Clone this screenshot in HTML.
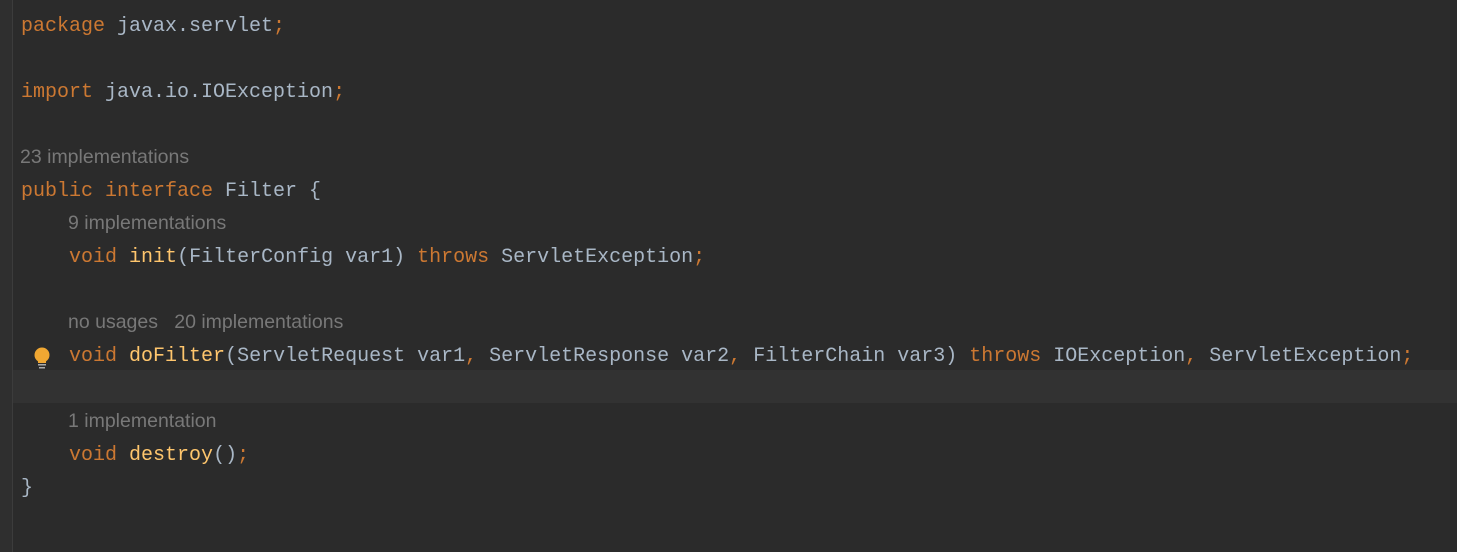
<!DOCTYPE html><html><head><style>
body{margin:0;width:1457px;height:552px;background:#2b2b2b;overflow:hidden;position:relative}
.g{position:absolute;left:0;top:0;width:12px;height:552px;background:#2f2f2f;border-right:1px solid #3c3c3c}
.hl{position:absolute;left:13px;top:370px;width:1444px;height:33px;background:#323232}
.l{position:absolute;left:21px;font:20px "Liberation Mono",monospace;color:#a9b7c6;white-space:pre;line-height:33px;height:33px}
.h{position:absolute;font:19.5px "Liberation Sans",sans-serif;color:#787878;white-space:pre;line-height:33px}
.k{color:#cc7832}.m{color:#ffc66d}
</style></head><body>
<div class="g"></div><div class="hl"></div>
<div class="l" style="top:10px"><span class="k">package</span> javax.servlet<span class="k">;</span></div>
<div class="l" style="top:76px"><span class="k">import</span> java.io.IOException<span class="k">;</span></div>
<div class="h" style="top:141px;left:20px">23 implementations</div>
<div class="l" style="top:175px"><span class="k">public interface</span> Filter {</div>
<div class="h" style="top:207px;left:68px">9 implementations</div>
<div class="l" style="top:241px">    <span class="k">void</span> <span class="m">init</span>(FilterConfig var1) <span class="k">throws</span> ServletException<span class="k">;</span></div>
<div class="h" style="top:306px;left:68px">no usages   20 implementations</div>
<svg style="position:absolute;left:33px;top:347px" width="18" height="24"><circle cx="9" cy="8" r="7.5" fill="#f0a732"/><rect x="5" y="13" width="8" height="3" fill="#f0a732"/><rect x="5" y="17" width="8" height="1.5" fill="#aaa"/><rect x="6" y="20" width="6" height="1.5" fill="#aaa"/></svg>
<div class="l" style="top:340px">    <span class="k">void</span> <span class="m">doFilter</span>(ServletRequest var1<span class="k">,</span> ServletResponse var2<span class="k">,</span> FilterChain var3) <span class="k">throws</span> IOException<span class="k">,</span> ServletException<span class="k">;</span></div>
<div class="h" style="top:405px;left:68px">1 implementation</div>
<div class="l" style="top:439px">    <span class="k">void</span> <span class="m">destroy</span>()<span class="k">;</span></div>
<div class="l" style="top:472px">}</div>
</body></html>
